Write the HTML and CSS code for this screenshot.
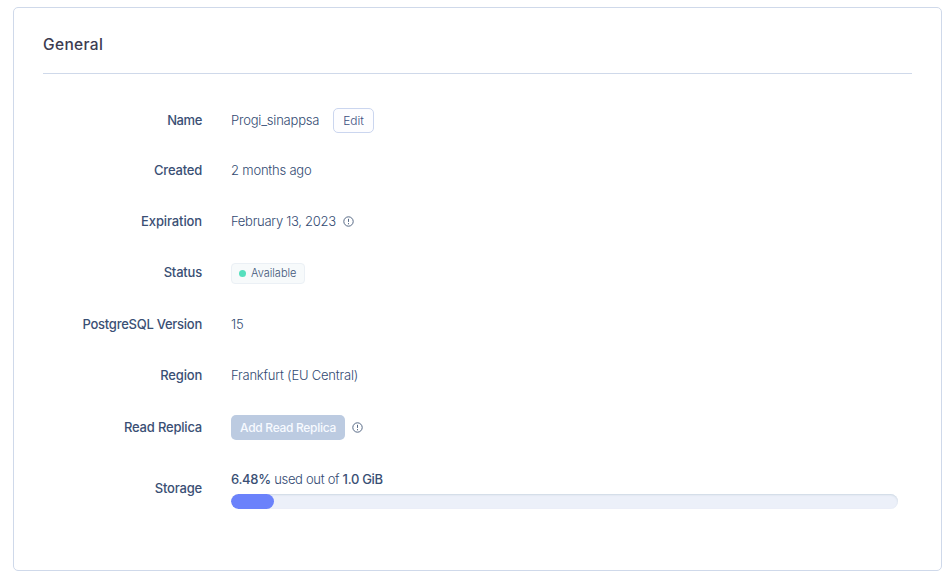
FILE: index.html
```html
<!DOCTYPE html>
<html lang="en">
<head>
<meta charset="utf-8">
<title>General</title>
<link rel="stylesheet" href="styles.css">
</head>
<body>
<section class="card">
  <h2 class="title"><span>General</span></h2>
  <dl class="details">
    <dt class="tight">Name</dt>
    <dd><span class="name">Progi_sinappsa</span><button class="edit">Edit</button></dd>
    <dt>Created</dt>
    <dd><span class="created">2 months ago</span></dd>
    <dt class="wide">Expiration</dt>
    <dd><span class="date">February 13, 2023</span><svg class="info" viewBox="0 0 11 11"><circle cx="5.5" cy="5.5" r="4.7"/><path d="M5.5 2.8v3.1M5.5 7.1v1.2"/></svg></dd>
    <dt>Status</dt>
    <dd><span class="status"><i class="dot"></i><span>Available</span></span></dd>
    <dt class="version-label">PostgreSQL Version</dt>
    <dd><span class="version">15</span></dd>
    <dt>Region</dt>
    <dd><span class="region">Frankfurt (EU Central)</span></dd>
    <dt>Read Replica</dt>
    <dd><button class="replica" disabled>Add Read Replica</button><svg class="info" viewBox="0 0 11 11"><circle cx="5.5" cy="5.5" r="4.7"/><path d="M5.5 2.8v3.1M5.5 7.1v1.2"/></svg></dd>
    <dt>Storage</dt>
    <dd class="storage">
      <div class="usage"><b>6.48%</b> used out of <b>1.0 GiB</b></div>
      <div class="track"><div class="fill" style="width:6.48%"></div></div>
    </dd>
  </dl>
</section>
</body>
</html>
```
FILE: styles.css
```css
* { box-sizing: border-box; }
body {
  margin: 0;
  padding: 7px 10px 13px 13px;
  background: #fff;
  color: #324a72;
  font: 300 13px/18px Inter, "Liberation Sans", sans-serif;
}
.card {
  height: 564px;
  padding: 0 29px;
  border: 1px solid #cfd9ea;
  border-radius: 5px;
}
.title {
  display: flex;
  align-items: center;
  height: 66px;
  margin: 0;
  padding-top: 8px;
  border-bottom: 1px solid #cfd9ea;
  color: #3c3b50;
  font-size: 15.5px;
  font-weight: 500;
  letter-spacing: 0.35px;
}
.details {
  display: grid;
  grid-template-columns: 159px 1fr;
  grid-template-rows: 51px 49px 53px 50px 53px 49px 55px 67px;
  column-gap: 29px;
  margin: 21px 14px 0 0;
}
dt, dd {
  display: flex;
  align-items: center;
  margin: 0;
  white-space: nowrap;
}
dt { justify-content: flex-end; color: #3a4f74; font-weight: 500; }
dt, .name, .created, .date, .version, .region { padding-bottom: 2px; }
dt, .name, .created, .region { letter-spacing: -0.2px; }
.tight { letter-spacing: -0.4px; }
.wide { letter-spacing: -0.12px; }
.version-label { letter-spacing: -0.26px; }
.edit, .replica {
  height: 25px;
  padding: 0;
  border-radius: 5px;
  font: 300 12px/23px Inter, "Liberation Sans", sans-serif;
}
.name { width: 88px; }
.edit {
  width: 41px;
  margin-left: 14px;
  border: 1px solid #cbd6ef;
  background: #fdfdff;
  color: #3e4f80;
}
.date { width: 105px; letter-spacing: -0.28px; }
.info {
  width: 11px;
  height: 11px;
  margin-left: 7px;
  fill: none;
  stroke: #566985;
  stroke-width: 1;
}
.status {
  display: flex;
  align-items: center;
  gap: 5px;
  width: 74px;
  height: 21px;
  padding-left: 7px;
  border: 1px solid #ebf0f5;
  border-radius: 4px;
  background: #f7fafb;
  color: #405578;
  font-size: 11px;
}
.dot {
  width: 7px;
  height: 7px;
  border-radius: 50%;
  background: #55dfbd;
}
.replica {
  width: 114px;
  border: 0;
  background: #bccbe1;
  color: #f7faff;
  font-weight: 500;
  letter-spacing: -0.3px;
}
.replica + .info { margin-left: 7px; }
.storage {
  flex-direction: column;
  align-items: stretch;
  padding-top: 15px;
}
.usage { letter-spacing: -0.31px; }
.usage b { color: #3a4f74; font-weight: 500; }
.track {
  height: 15px;
  margin-top: 6px;
  overflow: hidden;
  border-radius: 8px;
  background: #ecf0f9;
  box-shadow: inset 0 1px 2px #cdd8e3;
}
.fill {
  height: 100%;
  border-radius: 8px;
  background: #6b82fb;
}
```
